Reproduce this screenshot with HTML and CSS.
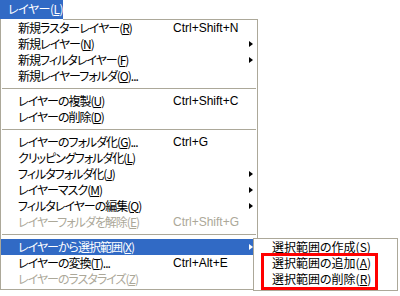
FILE: index.html
```html
<!DOCTYPE html>
<html lang="ja">
<head>
<meta charset="utf-8">
<link rel="stylesheet" href="styles.css">
</head>
<body>
<div class="screen">
  <div class="menubar"><span class="title">レイヤー(<u>L</u>)</span></div>
  <div class="menu">
    <div class="item"><span class="label">新規ラスターレイヤー(<u>R</u>)</span><span class="key">Ctrl+Shift+N</span></div>
    <div class="item"><span class="label">新規レイヤー(<u>N</u>)</span><span class="key"></span><span class="arrow"></span></div>
    <div class="item"><span class="label">新規フィルタレイヤー(<u>F</u>)</span><span class="key"></span><span class="arrow"></span></div>
    <div class="item"><span class="label">新規レイヤーフォルダ(<u>O</u>)...</span><span class="key"></span></div>
    <div class="sep"></div>
    <div class="item"><span class="label">レイヤーの複製(<u>U</u>)</span><span class="key">Ctrl+Shift+C</span></div>
    <div class="item"><span class="label">レイヤーの削除(<u>D</u>)</span><span class="key"></span></div>
    <div class="sep"></div>
    <div class="item"><span class="label">レイヤーのフォルダ化(<u>G</u>)...</span><span class="key">Ctrl+G</span></div>
    <div class="item"><span class="label">クリッピングフォルダ化(<u>L</u>)</span><span class="key"></span></div>
    <div class="item"><span class="label">フィルタフォルダ化(<u>J</u>)</span><span class="key"></span><span class="arrow"></span></div>
    <div class="item"><span class="label">レイヤーマスク(<u>M</u>)</span><span class="key"></span><span class="arrow"></span></div>
    <div class="item"><span class="label">フィルタレイヤーの編集(<u>Q</u>)</span><span class="key"></span><span class="arrow"></span></div>
    <div class="item disabled"><span class="label">レイヤーフォルダを解除(<u>E</u>)</span><span class="key">Ctrl+Shift+G</span></div>
    <div class="sep"></div>
    <div class="item active"><span class="label">レイヤーから選択範囲(<u>X</u>)</span><span class="key"></span><span class="arrow"></span></div>
    <div class="item"><span class="label">レイヤーの変換(<u>T</u>)...</span><span class="key">Ctrl+Alt+E</span></div>
    <div class="item disabled"><span class="label">レイヤーのラスタライズ(<u>Z</u>)</span><span class="key"></span></div>
  </div>
  <div class="submenu">
    <div class="subitem">選択範囲の作成(<u>S</u>)</div>
    <div class="subitem">選択範囲の追加(<u>A</u>)</div>
    <div class="subitem">選択範囲の削除(<u>R</u>)</div>
  </div>
  <div class="annot"></div>
</div>
</body>
</html>
```

FILE: styles.css
```css
* { box-sizing: border-box; }
html, body {
  margin: 0;
  padding: 0;
  background: #ffffff;
}
body {
  font-family: "Noto Sans CJK JP", "Liberation Sans", sans-serif;
  font-size: 12px;
  font-feature-settings: "palt";
  color: #000;
}
.screen {
  position: relative;
  width: 400px;
  height: 296px;
  overflow: hidden;
}
.menubar {
  height: 19px;
  display: flex;
}
.title {
  background: #316ac5;
  color: #fff;
  height: 19px;
  line-height: 18px;
  padding: 0 0 0 8px;
  width: 63px;
  white-space: nowrap;
  letter-spacing: -0.5px;
}
u { text-decoration-thickness: 1px; text-underline-offset: 1px; }
.menu {
  position: relative;
  width: 258px;
  border: 1px solid #aca899;
  border-top: none;
  padding: 1px 0 2px 0;
}
.menu::before {
  content: "";
  position: absolute;
  left: 62px;
  right: -1px;
  top: 0;
  height: 1px;
  background: #aca899;
}
.item {
  display: grid;
  grid-template-columns: 155px 1fr 4px;
  align-items: center;
  height: 16px;
  line-height: 16px;
  padding: 0 4px 0 17px;
  white-space: nowrap;
}
.label {
  letter-spacing: -1px;
}
.key {
  font-family: "Liberation Sans", sans-serif;
  font-size: 12px;
}
.arrow {
  width: 0;
  height: 0;
  border-left: 4px solid #000;
  border-top: 3.5px solid transparent;
  border-bottom: 3.5px solid transparent;
}
.disabled { color: #aca899; }
.active {
  background: #316ac5;
  color: #fff;
}
.active .arrow { border-left-color: #fff; }
.sep {
  height: 9px;
  display: flex;
  align-items: center;
  padding: 0 1px;
}
.sep::after {
  content: "";
  display: block;
  width: 100%;
  height: 1px;
  background: #aca899;
}
.submenu {
  position: absolute;
  left: 253px;
  top: 238px;
  width: 145px;
  background: #fff;
  border: 1px solid #aca899;
  padding: 0 0 3px 0;
}
.subitem {
  height: 16px;
  line-height: 16px;
  padding-left: 18px;
  white-space: nowrap;
}
.annot {
  position: absolute;
  left: 261px;
  top: 253px;
  width: 117px;
  height: 37px;
  border: 3px solid #ff0000;
}
```
